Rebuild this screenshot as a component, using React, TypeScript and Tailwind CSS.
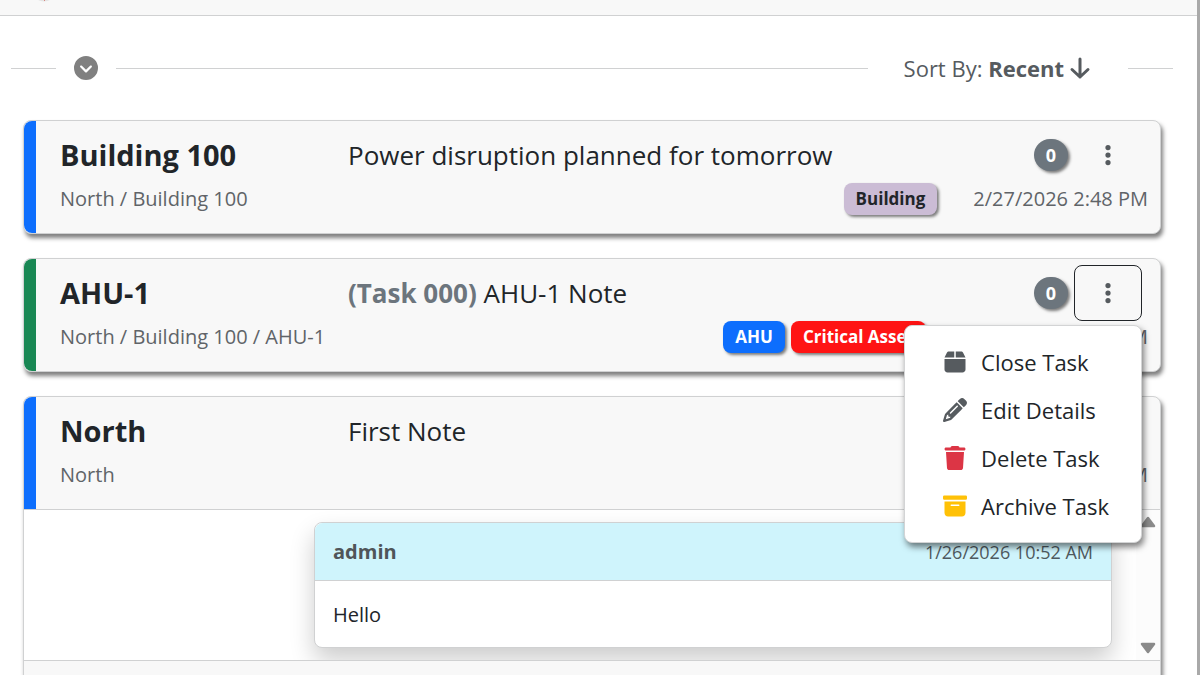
import type { ReactNode } from "react";
import { FaBox, FaPencil, FaTrash, FaEllipsisVertical, FaCircleChevronDown } from "react-icons/fa6";
import { BsArchiveFill } from "react-icons/bs";

type Tag = { label: string; className: string };

type Note = {
  id: number;
  title: string;
  path: string;
  task?: string;
  message: string;
  count: number;
  date: string;
  accent: string;
  tags: Tag[];
};

const notes: Note[] = [
  {
    id: 1,
    title: "Building 100",
    path: "North / Building 100",
    message: "Power disruption planned for tomorrow",
    count: 0,
    date: "2/27/2026 2:48 PM",
    accent: "border-[#0d6efd]",
    tags: [{ label: "Building", className: "bg-[#cbbcd5] text-[#212529]" }],
  },
  {
    id: 2,
    title: "AHU-1",
    path: "North / Building 100 / AHU-1",
    task: "(Task 000)",
    message: "AHU-1 Note",
    count: 0,
    date: "2/26/2026 12:45 PM",
    accent: "border-[#198754]",
    tags: [
      { label: "AHU", className: "bg-[#0d6efd] text-white" },
      { label: "Critical Asset", className: "bg-[#ff1414] text-white" },
    ],
  },
  {
    id: 3,
    title: "North",
    path: "North",
    message: "First Note",
    count: 1,
    date: "1/26/2026 10:51 AM",
    accent: "border-[#0d6efd]",
    tags: [],
  },
];

const menuItems = [
  { label: "Close Task", icon: FaBox, color: "text-[#565b5f]" },
  { label: "Edit Details", icon: FaPencil, color: "text-[#565b5f]" },
  { label: "Delete Task", icon: FaTrash, color: "text-[#dc3545]" },
  { label: "Archive Task", icon: BsArchiveFill, color: "text-[#ffc107]" },
];

function TaskMenu() {
  return (
    <div className="absolute top-full right-0 z-20 mt-1 flex flex-col rounded-lg border border-[#d3d4d5] bg-white py-3 pr-8 pl-9 shadow-[2px_4px_6px_rgba(0,0,0,0.5)]">
      {menuItems.map(({ label, icon: Icon, color }) => (
        <button key={label} type="button" className="flex h-12 items-center gap-3 text-[22px] whitespace-nowrap text-[#212529]">
          <span className={`flex w-7 justify-center ${color}`}>
            <Icon size={24} />
          </span>
          {label}
        </button>
      ))}
    </div>
  );
}

function NoteCard({ note, open, children }: { note: Note; open?: boolean; children?: ReactNode }) {
  return (
    <article className="rounded-lg border border-[#d0d1d2] bg-[#f8f8f8] shadow-[2px_4px_4px_rgba(0,0,0,0.5)]">
      <div
        className={`flex h-28 flex-col border-l-12 pt-1.5 pl-6 ${note.accent} ${children ? "rounded-t-lg" : "rounded-lg"}`}
      >
        <div className="flex h-14 items-center">
          <h2 className="w-72 shrink-0 text-[29px] font-bold">{note.title}</h2>
          <p className="flex-1 text-[26px]">
            {note.task && <b className="font-bold text-[#6c757d]">{note.task} </b>}
            {note.message}
          </p>
          <span className="mr-1.5 flex h-8 items-center rounded-full bg-[#6c757d] px-3 text-lg font-bold text-white shadow-[2px_2px_3px_rgba(0,0,0,0.5)]">
            {note.count}
          </span>
          <div className="relative mr-4.5">
            <button
              type="button"
              aria-label="Note actions"
              className={`flex h-14 w-17 items-center justify-center rounded-lg border ${open ? "border-[#212529]" : "border-transparent"}`}
            >
              <FaEllipsisVertical size={24} className="text-[#565b5f]" />
            </button>
            {open && <TaskMenu />}
          </div>
        </div>
        <div className="flex h-8 items-center pr-3 text-xl text-[#606468]">
          <span className="flex-1">{note.path}</span>
          <span className="mr-9 flex gap-1.5">
            {note.tags.map((tag) => (
              <span
                key={tag.label}
                className={`flex h-8 items-center rounded-lg px-3 text-[17px] font-bold shadow-[2px_2px_3px_rgba(0,0,0,0.5)] ${tag.className}`}
              >
                {tag.label}
              </span>
            ))}
          </span>
          <time>{note.date}</time>
        </div>
      </div>
      {children}
    </article>
  );
}

function Replies() {
  return (
    <>
      <div className="flex h-38 overflow-hidden border-y border-[#d0d1d2] bg-white">
        <div className="flex-1 pt-3 pl-[290px]">
          <div className="rounded-lg border border-[#d0d1d2] bg-white shadow-[0_12px_24px_rgba(0,0,0,0.2)]">
            <div className="flex h-[58px] items-center justify-between rounded-t-lg border-b border-[#d0d1d2] bg-[#cff4fc] px-4.5">
              <b className="text-xl text-[#4f5559]">admin</b>
              <time className="text-lg text-[#4f5a60]">1/26/2026 10:52 AM</time>
            </div>
            <p className="px-4.5 pt-5 pb-4.5 text-xl">Hello</p>
          </div>
        </div>
        <div className="ml-6 flex w-6 flex-col items-center justify-between bg-[#fcfcfc] py-1.5">
          <ScrollArrow />
          <ScrollArrow down />
        </div>
      </div>
      <div className="h-28" />
    </>
  );
}

function ScrollArrow({ down }: { down?: boolean }) {
  return (
    <svg width="16" height="12" viewBox="0 0 16 12" className={`text-[#8a8a8a] ${down ? "rotate-180" : ""}`}>
      <path d="M8 2 14 10H2Z" fill="currentColor" stroke="currentColor" strokeWidth="2.5" strokeLinejoin="round" />
    </svg>
  );
}

export default function App() {
  return (
    <main className="h-screen overflow-hidden border-r-3 border-[#a9a9a9] bg-white font-['Open_Sans','Noto_Sans',sans-serif] text-[#212529]">
      <header className="h-4 border-b border-[#d0d1d2] bg-[#f8f8f8] pl-8">
        <svg width="24" height="2" viewBox="0 22 24 2">
          <circle cx="12" cy="11" r="12.5" fill="#e4e4e4" />
          <path d="M12.500 20V23" stroke="#d98880" />
        </svg>
      </header>
      <div className="flex items-center py-10 pr-6 pl-[11px] text-[22px] leading-6 text-[#565b5f]">
        <hr className="w-[45px] border-[#d0d1d2]" />
        <button type="button" aria-label="Collapse" className="px-4.5 text-[#808080]">
          <FaCircleChevronDown size={24} />
        </button>
        <hr className="flex-1 border-[#d0d1d2]" />
        <button type="button" className="flex items-center pr-9 pl-9">
          Sort By:&nbsp;<b className="mr-1">Recent</b>
          <svg width="24" height="24" viewBox="0 0 24 24" fill="none" stroke="currentColor" strokeWidth="3" strokeLinecap="round" strokeLinejoin="round">
            <path d="M12 3V21M4 13.500L12 21L20 13.500" />
          </svg>
        </button>
        <hr className="w-[45px] border-[#d0d1d2]" />
      </div>
      <section className="flex flex-col gap-6 pr-9 pl-[23px]">
        {notes.map((note) => (
          <NoteCard key={note.id} note={note} open={note.id === 2}>
            {note.id === 3 && <Replies />}
          </NoteCard>
        ))}
      </section>
    </main>
  );
}
